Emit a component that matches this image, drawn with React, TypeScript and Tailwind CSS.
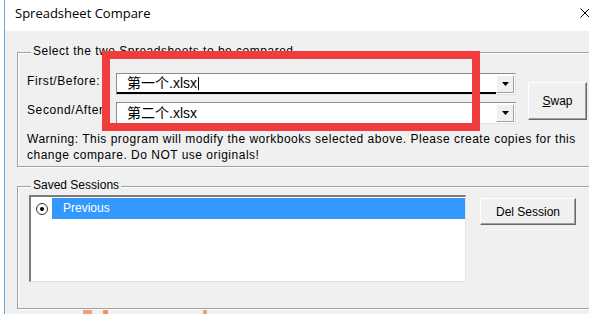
import React from "react";

function Combo({ value, focused }: { value: string; focused?: boolean }) {
  return (
    <div className="flex w-[400px] h-[22px] bg-white border border-t-[#8c8c8c] border-l-[#8c8c8c] border-r-[#e3e3e3] border-b-[#e3e3e3]">
      <div
        className={
          "flex-1 flex items-center pl-[10px] text-[14px] leading-[16px] text-black font-['Liberation_Sans','Noto_Sans_CJK_SC',sans-serif] " +
          (focused ? "border-b-2 border-black" : "")
        }
      >
        <span>{value}</span>
        {focused && <span className="ml-[1px] w-px h-[13px] bg-black" />}
      </div>
      <div className="w-[18px] my-[1px] mr-[1px] bg-[#f0f0f0] border border-t-white border-l-white border-r-[#a0a0a0] border-b-[#a0a0a0] flex items-center justify-center">
        <svg width="7" height="4" viewBox="0 0 7 4">
          <path d="M0 0 H7 L3.5 4 Z" fill="#000" />
        </svg>
      </div>
    </div>
  );
}

function Row({ label, value, focused }: { label: string; value: string; focused?: boolean }) {
  return (
    <div className="flex h-[22px]">
      <div className="w-[89px] pt-[1px] leading-[14px] tracking-[0.6px] whitespace-nowrap">{label}</div>
      <Combo value={value} focused={focused} />
    </div>
  );
}

export default function App() {
  return (
    <div className="relative w-[589px] h-[314px] overflow-hidden bg-white flex text-[12px] text-black font-['Liberation_Sans',sans-serif]">
      <div className="w-[4px] shrink-0 bg-white" />
      <div className="w-[600px] shrink-0 border-l border-[#6aa4db] flex flex-col">
        {/* title bar */}
        <div className="h-[31px] shrink-0 bg-white flex items-start justify-between pl-[10px] pr-[14px] pt-[4px]">
          <span className="text-[13px] leading-[18px] font-['Open_Sans',sans-serif]">
            Spreadsheet Compare
          </span>
          <svg className="mt-[4px]" width="10" height="10" viewBox="0 0 10 10">
            <path d="M0.5 0.5 L9.5 9.5 M9.5 0.5 L0.5 9.5" stroke="#000" strokeWidth="1" />
          </svg>
        </div>

        {/* body */}
        <div className="flex-1 bg-[#f0f0f0] pl-[12px] pr-[12px] pt-[21px] flex flex-col">
          {/* group 1 */}
          <div className="relative h-[115px] shrink-0 border border-[#a0a0a0] shadow-[inset_1px_1px_0_#fff,1px_1px_0_#fff] pl-[9px] pt-[20px]">
            <span className="absolute left-[13px] -top-[9px] px-[2px] bg-[#f0f0f0] leading-[14px] tracking-[0.5px] whitespace-nowrap">
              Select the two Spreadsheets to be compared
            </span>
            <div className="flex">
              <div className="flex flex-col gap-[7px]">
                <Row label="First/Before:" value="第一个.xlsx" focused />
                <Row label="Second/After" value="第二个.xlsx" />
              </div>
              <button className="ml-[12px] mt-[9px] w-[59px] h-[38px] bg-[#f0f0f0] border border-t-white border-l-white border-r-[#696969] border-b-[#696969] shadow-[inset_-1px_-1px_0_#a0a0a0] leading-[14px]">
                <span className="underline">S</span>wap
              </button>
            </div>
            <p className="mt-[7px] leading-[16px] tracking-[0.5px] whitespace-nowrap">
              Warning: This program will modify the workbooks selected above. Please create copies for this
              <br />
              change compare. Do NOT use originals!
            </p>
          </div>

          {/* group 2 */}
          <div className="relative mt-[19px] h-[123px] shrink-0 border border-[#a0a0a0] shadow-[inset_1px_1px_0_#fff,1px_1px_0_#fff] pl-[11px] pt-[8px] flex items-start">
            <span className="absolute left-[13px] -top-[9px] px-[2px] bg-[#f0f0f0] leading-[14px] whitespace-nowrap">
              Saved Sessions
            </span>
            <div className="w-[437px] h-[87px] bg-white border-l-2 border-t-2 border-r border-b border-l-[#7a7a7a] border-t-[#7a7a7a] border-r-[#e3e3e3] border-b-[#e3e3e3] flex flex-col">
              <div className="mt-[1px] h-[21px] flex items-center">
                <div className="w-[21px] h-full flex items-center pl-[5px]">
                  <div className="w-[12px] h-[12px] rounded-full border border-[#333] bg-white flex items-center justify-center">
                    <div className="w-[4px] h-[4px] rounded-full bg-black" />
                  </div>
                </div>
                <div className="flex-1 h-full bg-[#3399ff] text-white pl-[11px] leading-[21px]">Previous</div>
              </div>
            </div>
            <button className="ml-[14px] mt-[3px] w-[96px] h-[27px] bg-[#f0f0f0] border border-t-white border-l-white border-r-[#696969] border-b-[#696969] shadow-[inset_-1px_-1px_0_#a0a0a0] leading-[14px]">
              Del Session
            </button>
          </div>

          {/* bits of an annotation below */}
          <div className="mt-[1px] h-[4px] flex">
            <div className="ml-[66px] w-[9px] h-full bg-[#f0a070]" />
            <div className="ml-[11px] w-[5px] h-full bg-[#ee9460]" />
            <div className="ml-[95px] w-[4px] h-full bg-[#f0a070]" />
          </div>
        </div>
      </div>

      {/* red annotation rectangle */}
      <div className="absolute left-[102px] top-[51px] w-[378px] h-[80px] border-[8px] border-[#f03c3c] pointer-events-none" />
    </div>
  );
}
